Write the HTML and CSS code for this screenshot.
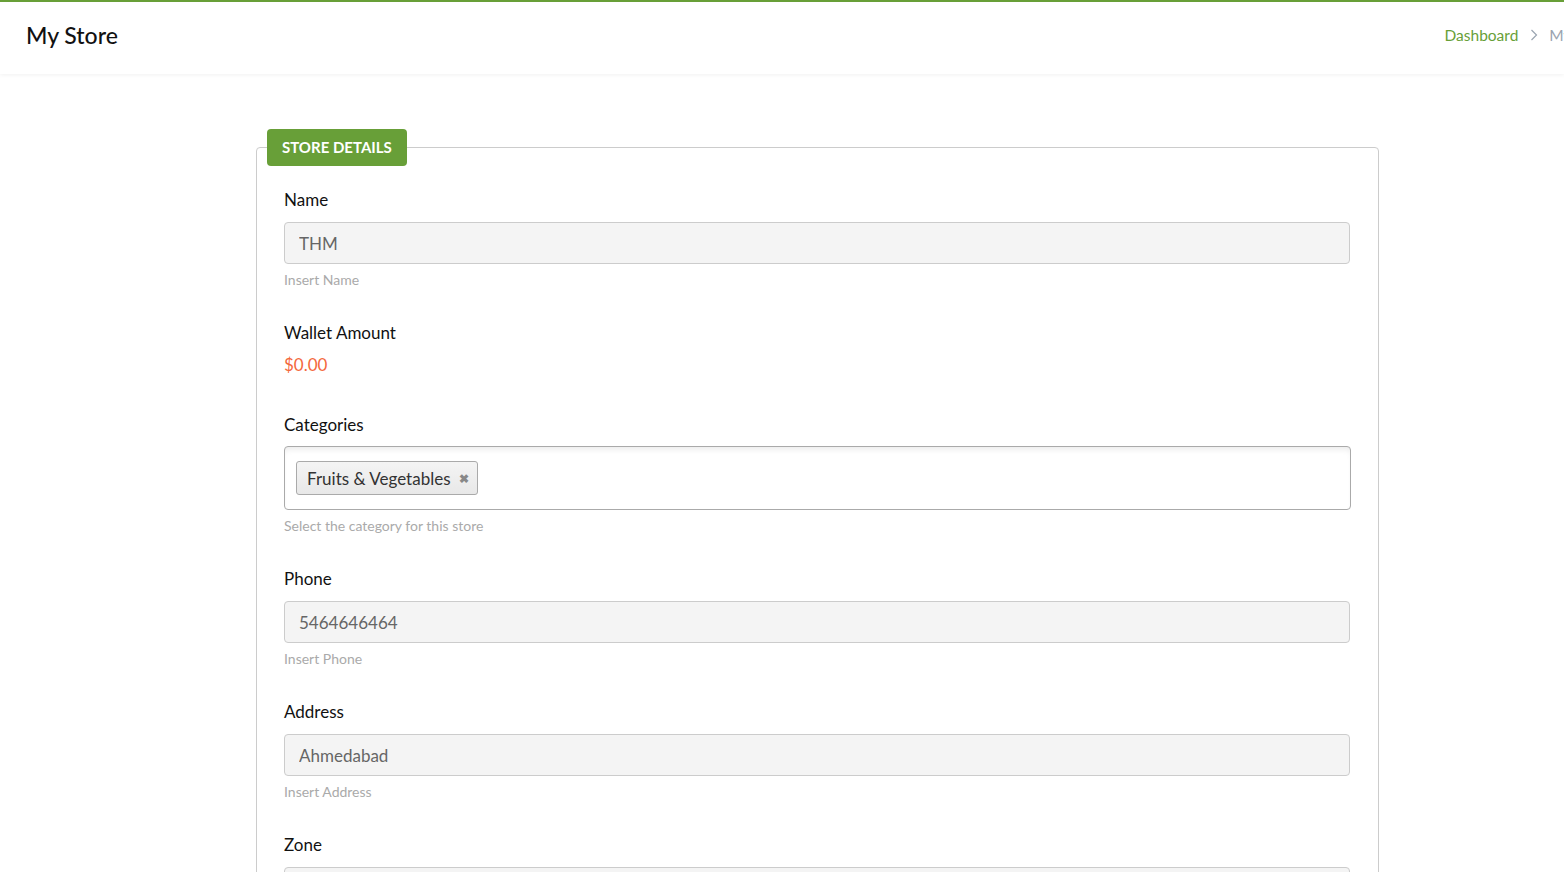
FILE: index.html
```html
<!DOCTYPE html>
<html lang="en">
<head>
    <meta charset="UTF-8">
    <meta name="viewport" content="width=device-width, initial-scale=1.0">
    <title>My Store</title>
    <link rel="stylesheet" href="styles.css">
</head>
<body>
<header class="top-bar">
    <h1 class="page-title">My Store</h1>
    <nav class="breadcrumb">
        <a href="#" class="crumb-link">Dashboard</a>
        <svg class="crumb-sep" width="8" height="12" viewBox="0 0 8 12">
            <polyline points="1.5,1 6.5,6 1.5,11" fill="none" stroke="#9aa4b0" stroke-width="1.2"/>
        </svg>
        <span class="crumb-current">My Store</span>
    </nav>
</header>

<main class="content">
    <fieldset class="store-box">
        <legend class="store-legend">STORE DETAILS</legend>

        <div class="field">
            <label class="field-label" for="storeName">Name</label>
            <input class="field-input" type="text" id="storeName" value="THM">
            <div class="field-help">Insert Name</div>
        </div>

        <div class="field wallet">
            <div class="field-label">Wallet Amount</div>
            <div class="wallet-value">$0.00</div>
        </div>

        <div class="field">
            <label class="field-label">Categories</label>
            <div class="tag-box">
                <span class="tag">Fruits &amp; Vegetables <span class="tag-remove">&#x2716;</span></span>
            </div>
            <div class="field-help">Select the category for this store</div>
        </div>

        <div class="field">
            <label class="field-label" for="storePhone">Phone</label>
            <input class="field-input" type="text" id="storePhone" value="5464646464">
            <div class="field-help">Insert Phone</div>
        </div>

        <div class="field">
            <label class="field-label" for="storeAddress">Address</label>
            <input class="field-input" type="text" id="storeAddress" value="Ahmedabad">
            <div class="field-help">Insert Address</div>
        </div>

        <div class="field">
            <label class="field-label" for="storeZone">Zone</label>
            <input class="field-input" type="text" id="storeZone" value="">
        </div>
    </fieldset>
</main>
</body>
</html>
```

FILE: styles.css
```css
body {
    font-family: Lato, "Noto Sans", sans-serif;
    margin: 0;
    background-color: #fff;
    overflow: hidden;
    height: 872px;
    border-top: 2px solid #689f38;
}

.top-bar {
    display: flex;
    justify-content: space-between;
    align-items: center;
    box-sizing: border-box;
    height: 72px;
    padding-left: 26px;
    padding-bottom: 6px;
    background-color: #fff;
    box-shadow: 0 1px 4px rgba(0, 0, 0, 0.06);
    white-space: nowrap;
    overflow: hidden;
}

.page-title {
    margin: 0;
    font-size: 23px;
    font-weight: 500;
    color: #111;
}

.breadcrumb {
    display: flex;
    align-items: center;
    font-size: 15.5px;
    margin-right: -47px;
}

.crumb-link {
    color: #689f38;
    text-decoration: none;
}

.crumb-sep {
    margin: 0 11px 0 12px;
}

.crumb-current {
    color: #9aa4b0;
}

/* Контейнер формы */
.content {
    padding: 55px 185px 0 256px;
}

.store-box {
    margin: 0;
    padding: 23px 28px 0 27px;
    border: 1px solid #ccc;
    border-radius: 4px;
    min-height: 900px;
}

.store-legend {
    background-color: #689f38;
    color: #fff;
    font-weight: 700;
    font-size: 15px;
    padding: 9px 15px;
    border-radius: 4px;
    margin-left: -17px;
    line-height: 19px;
}

.field {
    margin-bottom: 34px;
}

.field-label {
    display: block;
    font-size: 17px;
    color: #111;
    margin-bottom: 11px;
    line-height: 22px;
}

.field-input {
    display: block;
    box-sizing: border-box;
    width: 100%;
    height: 42px;
    padding: 0 14px;
    font-family: inherit;
    font-size: 17px;
    color: #666;
    background-color: #f4f4f4;
    border: 1px solid #ccc;
    border-radius: 4px;
}

.field-help {
    font-size: 14px;
    color: #aaa;
    margin-top: 8px;
    line-height: 16px;
}

.wallet {
    margin-bottom: 39px;
}

.wallet-value {
    color: #f4683c;
    font-size: 17px;
    margin-top: -1px;
}

.tag-box {
    box-sizing: border-box;
    height: 64px;
    margin-top: -1px;
    margin-right: -1px;
    padding: 14px 11px;
    border: 1px solid #aaa;
    border-radius: 4px;
    background-color: #fff;
    box-shadow: inset 0 5px 6px -3px rgba(0, 0, 0, 0.09);
}

.tag {
    display: inline-flex;
    align-items: center;
    height: 34px;
    box-sizing: border-box;
    padding: 0 8px 0 10px;
    font-size: 17px;
    color: #333;
    background: linear-gradient(#f4f4f4, #e8e8e8);
    border: 1px solid #aaa;
    border-radius: 3px;
}

.tag-remove {
    color: #888;
    font-size: 12px;
    font-weight: 700;
    margin-left: 8px;
}
```
